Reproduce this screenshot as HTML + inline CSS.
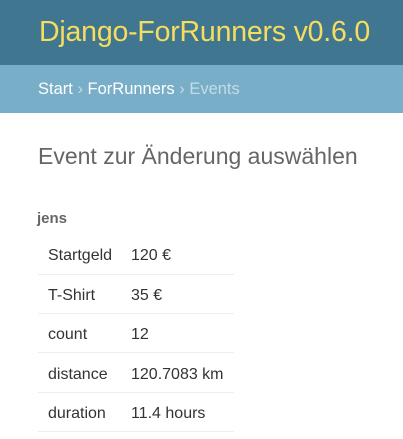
<!DOCTYPE html>
<html><head><meta charset="utf-8"><style>
*{margin:0;padding:0;box-sizing:border-box}
body{width:403px;height:439px;overflow:hidden;background:#fff;font-family:"Liberation Sans",sans-serif;}
#header{height:65px;background:#417690;color:#f5dd5d;font-size:28.5px;font-weight:300;padding-left:39px;line-height:64px;white-space:nowrap;letter-spacing:-0.2px}
#bc{height:48px;background:#79aec8;color:#fff;font-size:16.5px;padding-left:38px;line-height:48px;white-space:nowrap}
#bc .s{color:#c4dce8}
h1{font-size:23px;font-weight:300;color:#666;position:absolute;left:38px;top:143px;white-space:nowrap}
h3{font-size:15px;font-weight:bold;color:#666;position:absolute;left:37px;top:210px}
table{position:absolute;left:38px;top:235px;border-collapse:collapse;width:196px;font-size:16px;color:#333}
td{height:39.3px;border-bottom:1px solid #eee;padding:4px 0 0 10px;vertical-align:middle;white-space:nowrap}
td.v{padding-left:0}
td.k{width:93px}
</style></head><body>
<div id="header">Django-ForRunners v0.6.0</div>
<div id="bc">Start <span class="s">›</span> ForRunners <span class="s">› Events</span></div>
<h1>Event zur Änderung auswählen</h1>
<h3>jens</h3>
<table>
<tr><td class="k">Startgeld</td><td class="v">120 €</td></tr>
<tr><td class="k">T-Shirt</td><td class="v">35 €</td></tr>
<tr><td class="k">count</td><td class="v">12</td></tr>
<tr><td class="k">distance</td><td class="v">120.7083 km</td></tr>
<tr><td class="k">duration</td><td class="v">11.4 hours</td></tr>
</table>
</body></html>
